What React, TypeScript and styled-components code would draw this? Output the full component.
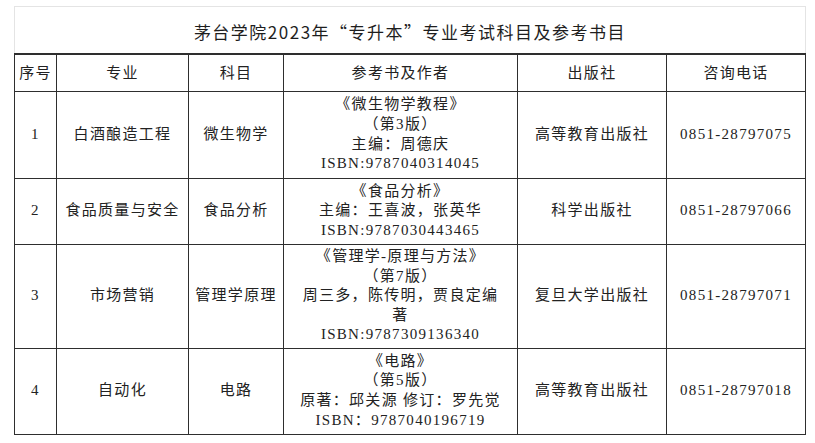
import React from "react";
import styled, { createGlobalStyle } from "styled-components";

const GlobalStyle = createGlobalStyle`
  html, body {
    margin: 0;
    padding: 0;
    background: #ffffff;
  }
  * { box-sizing: border-box; }
`;

const Page = styled.div`
  width: 815px;
  height: 443px;
  padding: 6px 9px 0 14px;
  background: #ffffff;
  color: #222;
`;

const Sheet = styled.div`
  width: 792px;
  display: flex;
  flex-direction: column;
`;

const TitleBar = styled.div`
  height: 47px;
  border: 1px solid #e4e4e4;
  border-bottom: none;
  display: flex;
  align-items: center;
  justify-content: center;
  font-family: "Noto Sans CJK SC", "Liberation Sans", sans-serif;
  font-size: 17px;
  letter-spacing: 1.5px;
  color: #1e1e1e;
  padding-top: 2px;
`;

const Table = styled.table`
  width: 791px;
  border-collapse: collapse;
  table-layout: fixed;
  font-family: "Liberation Serif", "Noto Sans CJK SC", serif;
  font-size: 15px;
  letter-spacing: 1.3px;
  color: #222;
`;

const HeadRow = styled.tr`
  height: 37px;
`;

const HeadCell = styled.th`
  border: 1.5px solid #2e2e2e;
  border-top: 2px solid #2e2e2e;
  font-weight: normal;
  text-align: center;
  vertical-align: middle;
  padding: 0 2px;
  line-height: 20px;
`;

const BodyRow = styled.tr<{ $h: number }>`
  height: ${(p) => p.$h}px;
`;

const Cell = styled.td`
  border: 1.5px solid #2e2e2e;
  text-align: center;
  vertical-align: middle;
  padding: 1px 2px;
  line-height: 19.6px;
`;

const Line = styled.div`
  white-space: nowrap;
`;

type Row = {
  no: string;
  major: string;
  subject: string;
  book: string[];
  press: string;
  phone: string;
  h: number;
};

const rows: Row[] = [
  {
    no: "1",
    major: "白酒酿造工程",
    subject: "微生物学",
    book: ["《微生物学教程》", "（第3版）", "主编：周德庆", "ISBN:9787040314045"],
    press: "高等教育出版社",
    phone: "0851-28797075",
    h: 87,
  },
  {
    no: "2",
    major: "食品质量与安全",
    subject: "食品分析",
    book: ["《食品分析》", "主编：王喜波，张英华", "ISBN:9787030443465"],
    press: "科学出版社",
    phone: "0851-28797066",
    h: 66,
  },
  {
    no: "3",
    major: "市场营销",
    subject: "管理学原理",
    book: [
      "《管理学-原理与方法》",
      "（第7版）",
      "周三多，陈传明，贾良定编",
      "著",
      "ISBN:9787309136340",
    ],
    press: "复旦大学出版社",
    phone: "0851-28797071",
    h: 104,
  },
  {
    no: "4",
    major: "自动化",
    subject: "电路",
    book: ["《电路》", "（第5版）", "原著：邱关源 修订：罗先觉", "ISBN：9787040196719"],
    press: "高等教育出版社",
    phone: "0851-28797018",
    h: 86,
  },
];

const headers = ["序号", "专业", "科目", "参考书及作者", "出版社", "咨询电话"];
const widths = [42, 132, 95, 234, 149, 139];

export default function App() {
  return (
    <>
      <GlobalStyle />
      <Page>
        <Sheet>
          <TitleBar>茅台学院2023年“专升本”专业考试科目及参考书目</TitleBar>
          <Table>
            <colgroup>
              {widths.map((w, i) => (
                <col key={i} style={{ width: w }} />
              ))}
            </colgroup>
            <thead>
              <HeadRow>
                {headers.map((h) => (
                  <HeadCell key={h}>{h}</HeadCell>
                ))}
              </HeadRow>
            </thead>
            <tbody>
              {rows.map((r) => (
                <BodyRow key={r.no} $h={r.h}>
                  <Cell>{r.no}</Cell>
                  <Cell>{r.major}</Cell>
                  <Cell>{r.subject}</Cell>
                  <Cell>
                    {r.book.map((l, i) => (
                      <Line key={i}>{l}</Line>
                    ))}
                  </Cell>
                  <Cell>{r.press}</Cell>
                  <Cell>{r.phone}</Cell>
                </BodyRow>
              ))}
            </tbody>
          </Table>
        </Sheet>
      </Page>
    </>
  );
}
